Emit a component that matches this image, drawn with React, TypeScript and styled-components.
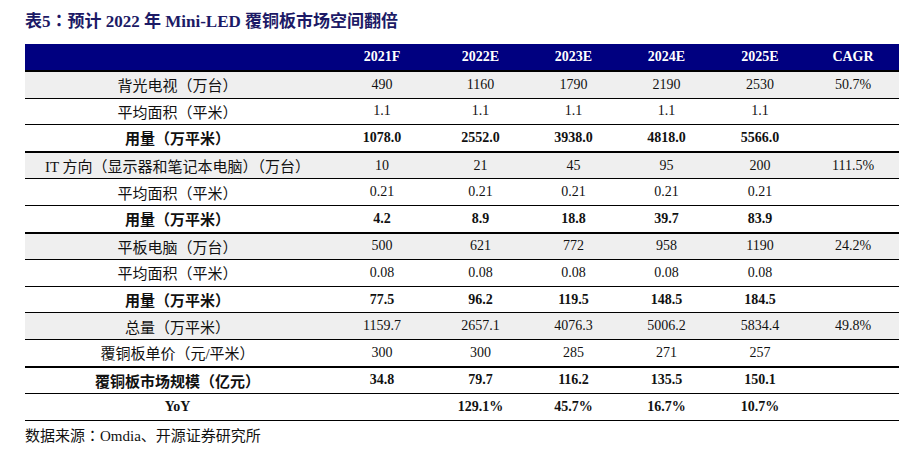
import React from "react";
import styled, { createGlobalStyle } from "styled-components";

type RowData = {
  label: string;
  values: string[];
  cagr?: string;
  gray?: boolean;
  bold?: boolean;
  thick?: boolean;
  serifLabel?: boolean;
};

const YEARS = ["2021F", "2022E", "2023E", "2024E", "2025E"];

const ROWS: RowData[] = [
  { label: "背光电视（万台）", values: ["490", "1160", "1790", "2190", "2530"], cagr: "50.7%", gray: true },
  { label: "平均面积（平米）", values: ["1.1", "1.1", "1.1", "1.1", "1.1"] },
  { label: "用量（万平米）", values: ["1078.0", "2552.0", "3938.0", "4818.0", "5566.0"], bold: true, thick: true },
  { label: "IT 方向（显示器和笔记本电脑）（万台）", values: ["10", "21", "45", "95", "200"], cagr: "111.5%", gray: true },
  { label: "平均面积（平米）", values: ["0.21", "0.21", "0.21", "0.21", "0.21"] },
  { label: "用量（万平米）", values: ["4.2", "8.9", "18.8", "39.7", "83.9"], bold: true, thick: true },
  { label: "平板电脑（万台）", values: ["500", "621", "772", "958", "1190"], cagr: "24.2%", gray: true },
  { label: "平均面积（平米）", values: ["0.08", "0.08", "0.08", "0.08", "0.08"] },
  { label: "用量（万平米）", values: ["77.5", "96.2", "119.5", "148.5", "184.5"], bold: true },
  { label: "总量（万平米）", values: ["1159.7", "2657.1", "4076.3", "5006.2", "5834.4"], cagr: "49.8%", gray: true },
  { label: "覆铜板单价（元/平米）", values: ["300", "300", "285", "271", "257"], thick: true },
  { label: "覆铜板市场规模（亿元）", values: ["34.8", "79.7", "116.2", "135.5", "150.1"], bold: true },
  { label: "YoY", values: ["", "129.1%", "45.7%", "16.7%", "10.7%"], bold: true, serifLabel: true },
];

const App = () => {
  return (
    <SPage>
      <GlobalStyle />
      <STitle>
        表5<SColon>：</SColon>预计 2022 年 Mini-LED 覆铜板市场空间翻倍
      </STitle>
      <STable>
        <SHeadRow>
          <SHeadCell />
          {YEARS.map((y) => (
            <SHeadCell key={y}>{y}</SHeadCell>
          ))}
          <SHeadCell>CAGR</SHeadCell>
        </SHeadRow>
        {ROWS.map((row, i) => (
          <SRow key={i} $gray={row.gray} $thick={row.thick}>
            <SLabel $bold={row.bold} $serif={row.serifLabel}>
              {row.label}
            </SLabel>
            {row.values.map((v, j) => (
              <SValue key={j} $bold={row.bold}>
                {v}
              </SValue>
            ))}
            <SValue>{row.cagr ?? ""}</SValue>
          </SRow>
        ))}
      </STable>
      <SSource>
        数据来源<SColon>：</SColon>Omdia、开源证券研究所
      </SSource>
    </SPage>
  );
};

const GlobalStyle = createGlobalStyle`
  html, body {
    margin: 0;
    padding: 0;
    background: #ffffff;
  }
`;

const COLUMNS = "305px 104px 93px 93px 93px 94px 92px";

const SPage = styled.div`
  width: 923px;
  height: 458px;
  box-sizing: border-box;
  padding: 10px 0 0 25px;
  background: #ffffff;
`;

const STitle = styled.h1`
  margin: 0;
  height: 34px;
  font-family: "Liberation Serif", "Noto Sans CJK SC", serif;
  font-size: 17px;
  line-height: 20px;
  font-weight: bold;
  color: #1c1a66;
`;

const SColon = styled.span`
  font-family: "Noto Sans CJK TC", sans-serif;
`;

const STable = styled.div`
  width: 874px;
  display: flex;
  flex-direction: column;
`;

const SHeadRow = styled.div`
  display: grid;
  grid-template-columns: ${COLUMNS};
  height: 26px;
  background: #000080;
  border-bottom: 2px solid #000000;
`;

const SHeadCell = styled.div`
  display: flex;
  align-items: center;
  justify-content: center;
  font-family: "Liberation Serif", serif;
  font-weight: bold;
  font-size: 14px;
  color: #ffffff;
`;

const SRow = styled.div<{ $gray?: boolean; $thick?: boolean }>`
  display: grid;
  grid-template-columns: ${COLUMNS};
  height: 25.6px;
  background: ${(p) => (p.$gray ? "#efefef" : "#ffffff")};
  border-bottom: ${(p) => (p.$thick ? "2px" : "1px")} solid #000000;
`;

const SLabel = styled.div<{ $bold?: boolean; $serif?: boolean }>`
  display: flex;
  align-items: center;
  justify-content: center;
  font-family: ${(p) =>
    p.$serif
      ? `"Liberation Serif", serif`
      : `"Liberation Serif", "Noto Sans CJK SC", sans-serif`};
  font-size: ${(p) => (p.$serif ? "14px" : "15px")};
  font-weight: ${(p) => (p.$bold ? "bold" : "normal")};
  color: #111111;
  white-space: nowrap;
`;

const SValue = styled.div<{ $bold?: boolean }>`
  display: flex;
  align-items: center;
  justify-content: center;
  font-family: "Liberation Serif", serif;
  font-size: 14px;
  font-weight: ${(p) => (p.$bold ? "bold" : "normal")};
  color: #111111;
`;

const SSource = styled.div`
  margin-top: 4px;
  font-family: "Liberation Serif", "Noto Sans CJK SC", serif;
  font-size: 15px;
  line-height: 20px;
  color: #111111;
`;

export default App;
